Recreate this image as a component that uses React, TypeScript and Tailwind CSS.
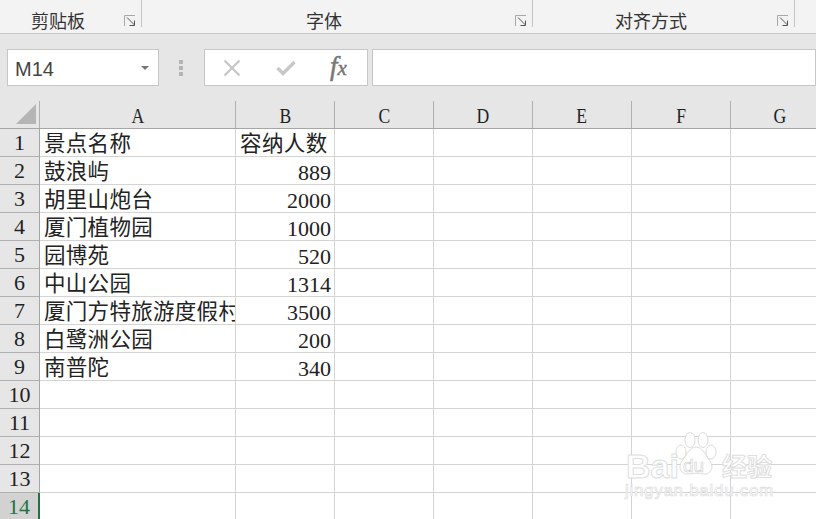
const cjk = { serif: "font-['Liberation_Serif','Noto_Sans_CJK_SC',serif]" };

const columns = [
  { label: 'A', width: 'w-[196px]' },
  { label: 'B', width: 'w-[99px]' },
  { label: 'C', width: 'w-[99px]' },
  { label: 'D', width: 'w-[99px]' },
  { label: 'E', width: 'w-[99px]' },
  { label: 'F', width: 'w-[99px]' },
  { label: 'G', width: 'w-[99px]' },
];

const rows: [string, string][] = [
  ['景点名称', '容纳人数'],
  ['鼓浪屿', '889'],
  ['胡里山炮台', '2000'],
  ['厦门植物园', '1000'],
  ['园博苑', '520'],
  ['中山公园', '1314'],
  ['厦门方特旅游度假村', '3500'],
  ['白鹭洲公园', '200'],
  ['南普陀', '340'],
  ['', ''],
  ['', ''],
  ['', ''],
  ['', ''],
  ['', ''],
];

function Launcher() {
  return (
    <svg width="13" height="12" viewBox="0 0 13 12" fill="none" className="shrink-0">
      <path d="M0.5 11V0.5H11" stroke="#a8a8a8" />
      <path d="M3 2.5L10.5 10M10.5 5.5V10.5H5.5" stroke="#555" />
    </svg>
  );
}

function RibbonGroup({ label, width, pad, launcher }: { label: string; width: string; pad: string; launcher: boolean }) {
  return (
    <div className={`${width} h-[27px] flex items-end border-r border-[#c4c4c4] shrink-0`}>
      <span className={`${pad} mb-[-5px] text-[18px] leading-[24px] text-[#333] whitespace-nowrap`}>{label}</span>
      {launcher && (
        <span className="ml-auto mr-[4px] mb-[0px] flex">
          <Launcher />
        </span>
      )}
    </div>
  );
}

function Watermark() {
  return (
    <div className="absolute left-[624px] top-[432px] w-[150px] h-[80px] pointer-events-none font-['Liberation_Sans',sans-serif]">
      <svg width="44" height="44" viewBox="0 0 44 44" fill="#fff" stroke="#dcdcdc" strokeWidth="1" className="absolute left-[50px] top-[0px]">
        <ellipse cx="7" cy="20" rx="5" ry="7" />
        <ellipse cx="16" cy="8" rx="5" ry="7.5" />
        <ellipse cx="29" cy="8" rx="5" ry="7.5" />
        <ellipse cx="37" cy="20" rx="5" ry="7" />
        <path d="M22 15C29 15 31 23 36 29C41 36 36 43 29 42C25 41 19 41 15 42C8 43 3 36 8 29C13 23 15 15 22 15Z" />
      </svg>
      <span className="absolute left-[2px] top-[16px] text-[34px] leading-[36px] font-bold text-white [-webkit-text-stroke:1px_#dedede]">Bai</span>
      <span className="absolute left-[59px] top-[24px] text-[19px] leading-[20px] text-white [-webkit-text-stroke:0.7px_#d4d4d4]">du</span>
      <span className="absolute left-[98px] top-[18px] text-[25px] leading-[30px] font-['Noto_Sans_CJK_SC',sans-serif] font-bold text-white [-webkit-text-stroke:1px_#dedede]">经验</span>
      <span className="absolute left-[1px] top-[49px] text-[17px] leading-[20px] tracking-[0.7px] text-white [-webkit-text-stroke:0.7px_#dedede]">jingyan.baidu.com</span>
    </div>
  );
}

export default function App() {
  return (
    <div className="relative w-[816px] h-[519px] overflow-hidden bg-white font-['Noto_Sans_CJK_SC',sans-serif]">
      {/* ribbon */}
      <div className="h-[34px] flex bg-[#f3f3f3] border-b border-[#c8c8c8]">
        <RibbonGroup label="剪贴板" width="w-[142px]" pad="pl-[31px]" launcher />
        <RibbonGroup label="字体" width="w-[391px]" pad="pl-[164px]" launcher />
        <RibbonGroup label="对齐方式" width="w-[262px]" pad="pl-[82px]" launcher />
      </div>

      {/* formula bar */}
      <div className="h-[67px] bg-[#e6e6e6] flex items-start pt-[15px] pl-[7px]">
        <div className="w-[152px] h-[37px] bg-white border border-[#c6c6c6] flex items-center pl-[7px] pr-[9px]">
          <span className="font-['Liberation_Sans',sans-serif] text-[20px] leading-[24px] pt-[2px] text-[#444]">M14</span>
          <span className="ml-auto w-0 h-0 border-x-[4px] border-x-transparent border-t-[4px] border-t-[#777]" />
        </div>
        <div className="w-[45px] h-[37px] flex flex-col items-center justify-center gap-[2px] pr-[2px]">
          <span className="w-[4px] h-[4px] bg-[#b4b4b4]" />
          <span className="w-[4px] h-[4px] bg-[#b4b4b4]" />
          <span className="w-[4px] h-[4px] bg-[#b4b4b4]" />
        </div>
        <div className="w-[164px] h-[37px] bg-white border border-[#c6c6c6] flex items-center relative shrink-0">
          <svg width="18" height="18" viewBox="0 0 18 18" fill="none" stroke="#c8c8c8" strokeWidth="2.4" className="ml-[18px]">
            <path d="M1.5 1.5L16.5 16.5M16.5 1.5L1.5 16.5" />
          </svg>
          <svg width="20" height="16" viewBox="0 0 20 16" fill="none" stroke="#c8c8c8" strokeWidth="3.4" className="ml-[35px]">
            <path d="M1.5 8L7 13.5L18.5 2" />
          </svg>
          <span className="ml-[34px] font-['Liberation_Serif',serif] italic text-[#777] [-webkit-text-stroke:0.5px_#777] whitespace-nowrap">
            <span className="text-[27px] leading-[24px]">f</span>
            <span className="text-[21px] leading-[24px]">x</span>
          </span>
        </div>
        <div className="ml-[4px] flex-1 h-[37px] bg-white border border-[#c6c6c6]" />
      </div>

      {/* column headers */}
      <div className={`h-[28px] flex bg-[#e6e6e6] border-b border-[#a6a6a6] ${cjk.serif}`}>
        <div className="w-[40px] shrink-0 border-r border-[#b0b0b0] flex items-end justify-end pr-[3px] pb-[4px]">
          <span className="w-0 h-0 border-l-[20px] border-l-transparent border-b-[20px] border-b-[#b5b5b5]" />
        </div>
        {columns.map((col) => (
          <div key={col.label} className={`${col.width} shrink-0 border-r border-[#b0b0b0] flex items-center justify-center pt-[3px] text-[22px] leading-[24px] text-[#222]`}>
            <span className="inline-block scale-x-[0.8]">{col.label}</span>
          </div>
        ))}
      </div>

      {/* cells */}
      {rows.map(([name, count], i) => {
        const active = i === 13;
        // the header row's text runs left like a label, the counts run right
        const isHeader = i === 0;
        return (
          <div key={i} className={`h-[28px] flex ${cjk.serif} text-[21.5px] leading-[31px] text-[#222]`}>
            <div className={`w-[40px] shrink-0 flex items-center justify-center border-b border-r text-[22px] ${active ? 'bg-[#d2d2d2] text-[#217346] border-r-[#217346] border-r-2 border-b-[#d2d2d2]' : 'bg-[#e6e6e6] border-b-[#b0b0b0] border-r-[#a6a6a6]'}`}>
              {i + 1}
            </div>
            <div className="w-[196px] shrink-0 border-r border-b border-[#d4d4d4] pl-[4px] overflow-hidden whitespace-nowrap tracking-[0.3px]">{name}</div>
            <div className={`w-[99px] shrink-0 border-r border-b border-[#d4d4d4] overflow-hidden whitespace-nowrap ${isHeader ? 'pl-[4px] text-left tracking-[0.4px]' : 'pr-[3px] text-right text-[22px]'}`}>{count}</div>
            {columns.slice(2).map((col) => (
              <div key={col.label} className={`${col.width} shrink-0 border-r border-b border-[#d4d4d4]`} />
            ))}
          </div>
        );
      })}

      <Watermark />
    </div>
  );
}
